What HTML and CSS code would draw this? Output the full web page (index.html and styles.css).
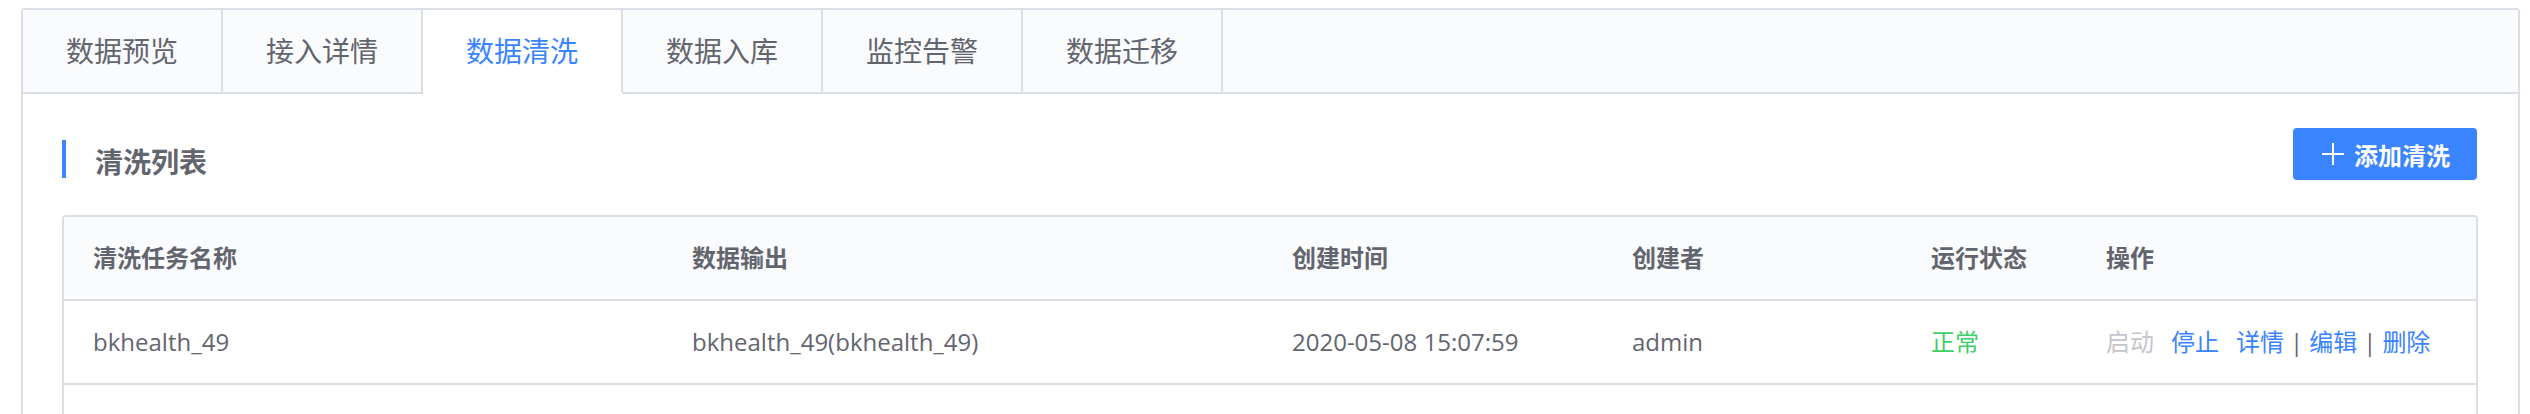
FILE: index.html
```html
<!DOCTYPE html>
<html lang="zh-CN">
<head>
<meta charset="utf-8">
<title>数据清洗</title>
<link rel="stylesheet" href="styles.css">
</head>
<body>
<div class="page">
  <div class="panel">
    <div class="tabbar">
      <div class="tab">数据预览</div>
      <div class="tab">接入详情</div>
      <div class="tab active">数据清洗</div>
      <div class="tab">数据入库</div>
      <div class="tab">监控告警</div>
      <div class="tab">数据迁移</div>
      <div class="tab-rest"></div>
    </div>
    <div class="content">
      <div class="section-head">
        <div class="section-title"><span class="title-bar"></span><span class="title-text">清洗列表</span></div>
        <button class="btn-primary"><svg class="plus" width="22" height="22" viewBox="0 0 22 22"><path d="M11 0V22M0 11H22" stroke="#fff" stroke-width="2" fill="none"/></svg><span>添加清洗</span></button>
      </div>
      <div class="table">
        <div class="row head">
          <div class="cell">清洗任务名称</div>
          <div class="cell">数据输出</div>
          <div class="cell">创建时间</div>
          <div class="cell">创建者</div>
          <div class="cell">运行状态</div>
          <div class="cell">操作</div>
        </div>
        <div class="row">
          <div class="cell">bkhealth_49</div>
          <div class="cell">bkhealth_49(bkhealth_49)</div>
          <div class="cell">2020-05-08 15:07:59</div>
          <div class="cell">admin</div>
          <div class="cell status-ok">正常</div>
          <div class="cell ops"><span class="op disabled">启动</span><span class="op link">停止</span><span class="op link">详情</span><span class="sep">|</span><span class="op link">编辑</span><span class="sep">|</span><span class="op link">删除</span></div>
        </div>
        <div class="row empty">
          <div class="cell"></div>
        </div>
      </div>
    </div>
  </div>
</div>
</body>
</html>
```

FILE: styles.css
```css
html, body {
  margin: 0;
  padding: 0;
  overflow: hidden;
  background: #ffffff;
}
body {
  font-family: "Open Sans", "Noto Sans CJK SC", sans-serif;
  color: #63656e;
}
.page {
  padding: 8px 10px 0 21px;
}
.panel {
  border: 2px solid #dcdee5;
  border-bottom: none;
  border-radius: 4px 4px 0 0;
  min-height: 600px;
}
.tabbar {
  display: flex;
  height: 84px;
  background: #fafbfd;
}
.tab {
  width: 198px;
  flex: none;
  border-right: 2px solid #dcdee5;
  border-bottom: 2px solid #dcdee5;
  display: flex;
  align-items: center;
  justify-content: center;
  font-size: 28px;
  line-height: 1;
  color: #63656e;
  box-sizing: content-box;
  height: 82px;
}
.tab.active {
  background: #ffffff;
  color: #3a84ff;
  border-bottom-color: #ffffff;
}
.tab-rest {
  flex: 1;
  border-bottom: 2px solid #dcdee5;
  height: 82px;
}
.content {
  padding: 34px 40px 0 39px;
}
.section-head {
  display: flex;
  justify-content: space-between;
  align-items: flex-start;
  height: 52px;
}
.section-title {
  display: flex;
  align-items: center;
  margin-top: 12px;
  height: 38px;
}
.title-bar {
  width: 4px;
  height: 38px;
  background: #3a84ff;
}
.title-text {
  margin-left: 29px;
  font-size: 28px;
  font-weight: 700;
  line-height: 38px;
  color: #63656e;
  padding-top: 5px;
}
.btn-primary {
  width: 184px;
  height: 52px;
  border: none;
  border-radius: 4px;
  background: #3a84ff;
  color: #ffffff;
  display: flex;
  align-items: center;
  justify-content: center;
  gap: 10px;
  font-family: "Open Sans", "Noto Sans CJK SC", sans-serif;
  font-size: 24px;
  font-weight: 700;
  padding: 0 0 0 2px;
  margin-right: 1px;
}
.plus {
  display: block;
}
.table {
  margin-top: 35px;
  border: 2px solid #dcdee5;
  border-radius: 4px 4px 0 0;
  border-bottom: none;
}
.row {
  display: grid;
  grid-template-columns: 599px 600px 340px 299px 175px 1fr;
  height: 82px;
  border-bottom: 2px solid #dcdee5;
  align-items: center;
}
.row.head {
  background: #fafbfd;
  font-weight: 700;
}
.row.empty {
  height: 84px;
  border-bottom: none;
}
.cell {
  padding-left: 29px;
  font-size: 24px;
  line-height: 32px;
  white-space: nowrap;
}
.status-ok {
  color: #3fcf68;
}
.ops {
  display: flex;
  align-items: center;
}
.op.disabled {
  color: #c4c6cc;
  margin-right: 17px;
}
.op.link {
  color: #3a84ff;
}
.op.link + .op.link {
  margin-left: 17px;
}
.sep {
  color: #63656e;
  margin: 0 6px;
}
```
